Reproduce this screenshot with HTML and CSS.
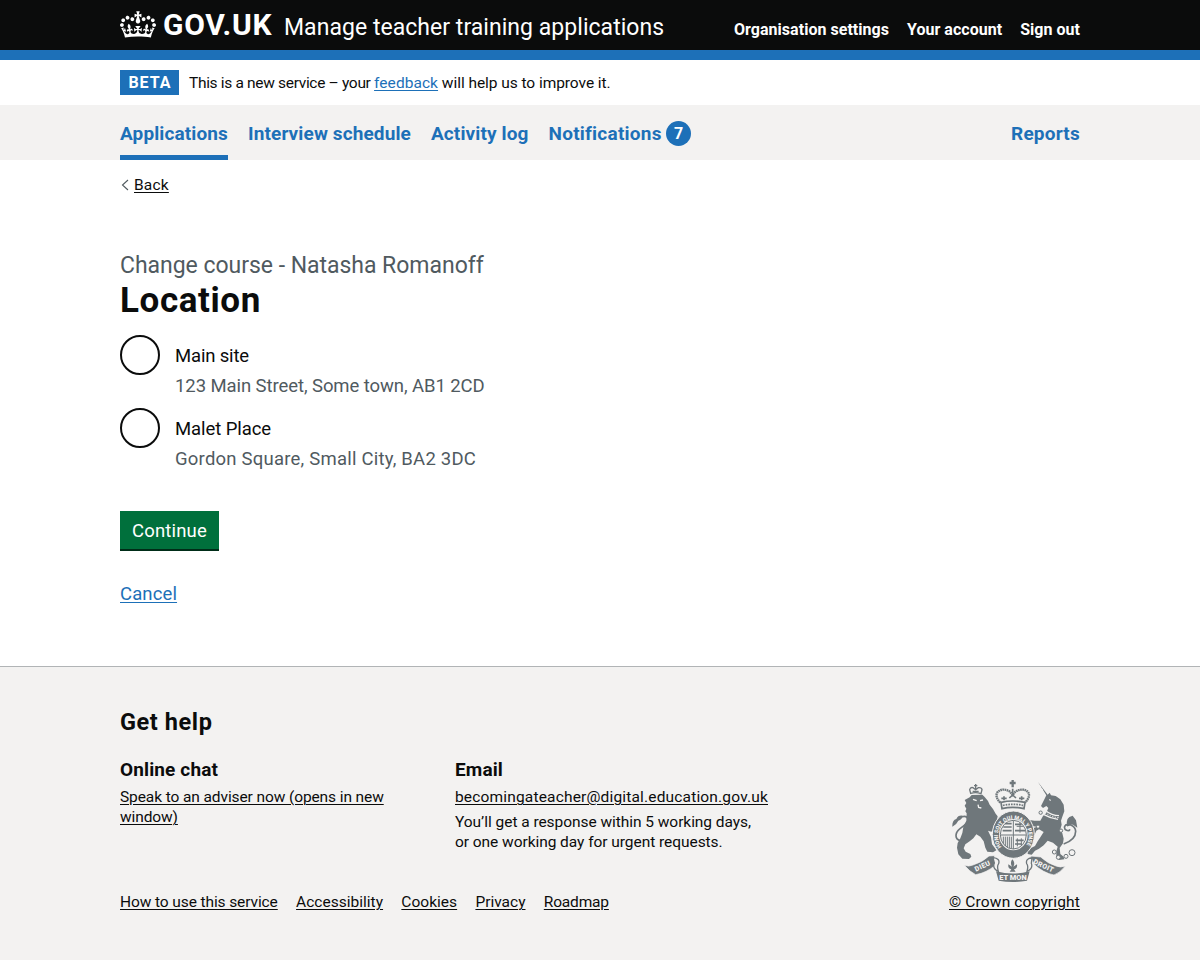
FILE: index.html
```html
<!DOCTYPE html>
<html lang="en">
<head>
<meta charset="utf-8">
<title>Location - Manage teacher training applications - GOV.UK</title>
<link rel="stylesheet" href="styles.css">
</head>
<body>
<header class="header">
  <div class="container header-row">
    <a class="logo" href="#">
      <svg class="crown" viewBox="0 0 132 97" width="36" height="27" aria-hidden="true"><path fill="currentColor" fill-rule="evenodd" d="M25 30.2c3.5 1.5 7.7-.2 9.1-3.7 1.5-3.6-.2-7.8-3.9-9.2-3.6-1.4-7.6.3-9.1 3.9-1.4 3.5.3 7.5 3.9 9zM9 39.5c3.6 1.5 7.8-.2 9.2-3.7 1.5-3.6-.2-7.8-3.9-9.1-3.6-1.5-7.6.2-9.1 3.8-1.4 3.5.3 7.5 3.8 9zM4.4 57.2c3.5 1.5 7.7-.2 9.1-3.8 1.5-3.6-.2-7.7-3.9-9.1-3.5-1.5-7.6.3-9.1 3.8-1.4 3.5.3 7.6 3.9 9.1zm38.3-21.4c3.5 1.5 7.7-.2 9.1-3.8 1.5-3.6-.2-7.7-3.9-9.1-3.6-1.5-7.6.3-9.1 3.8-1.3 3.6.4 7.7 3.9 9.1zm64.4-5.6c-3.6 1.5-7.8-.2-9.1-3.7-1.5-3.6.2-7.8 3.8-9.2 3.6-1.4 7.7.3 9.2 3.9 1.3 3.5-.4 7.5-3.9 9zm15.9 9.3c-3.6 1.5-7.7-.2-9.1-3.7-1.5-3.6.2-7.8 3.7-9.1 3.6-1.5 7.7.2 9.2 3.8 1.5 3.5-.3 7.5-3.8 9zm4.7 17.7c-3.6 1.5-7.8-.2-9.2-3.8-1.5-3.6.2-7.7 3.9-9.1 3.6-1.5 7.7.3 9.2 3.8 1.3 3.5-.4 7.6-3.9 9.1zM89.3 35.8c-3.6 1.5-7.8-.2-9.2-3.8-1.4-3.6.2-7.7 3.9-9.1 3.6-1.5 7.7.3 9.2 3.8 1.4 3.6-.3 7.7-3.9 9.1zM69.7 17.7l8.9 4.7V9.3l-8.9 2.8c-.2-.3-.5-.6-.9-.9L72.4 0H59.6l3.5 11.2c-.3.3-.6.5-.9.9l-8.8-2.8v13.1l8.8-4.7c.3.3.6.7.9.9l-5 15.4v.1c-.2.8-.4 1.6-.4 2.4 0 4.1 3.1 7.5 7 8.1h.2c.3 0 .7.1 1 .1.4 0 .7 0 1-.1h.2c4-.6 7.1-4.1 7.1-8.1 0-.8-.1-1.7-.4-2.4V34l-5.1-15.4c.4-.2.7-.6 1-.9zM66 92.8c16.9 0 32.8 1.1 47.1 3.2 4-16.9 8.9-26.7 14-33.5l-9.6-3.4c1 4.9 1.1 7.2 0 10.2-1.5-1.4-3-4.3-4.2-8.7L108.6 76c2.8-2 5-3.2 7.5-3.3-4.4 9.4-10 11.9-13.6 11.2-4.3-.8-6.3-4.6-5.6-7.9 1-4.7 5.7-5.9 8-.5 4.3-8.7-3-11.4-7.6-8.8 7.1-7.2 7.9-13.5 2.1-21.1-8 6.1-8.1 12.3-4.5 20.8-4.7-5.4-12.1-2.5-9.5 6.2 3.4-5.2 7.9-2 7.2 3.1-.6 4.3-6.4 7.8-13.5 7.2-10.3-.9-10.9-8-11.2-13.8 2.5-.5 7.1 1.8 11 7.3L80.2 60c-4.1 4.4-8 5.3-12.3 5.4 1.4-4.4 8-11.6 8-11.6H55.5s6.4 7.2 7.9 11.6c-4.2-.1-8-1-12.3-5.4l1.4 16.4c3.9-5.5 8.5-7.7 10.9-7.3-.3 5.8-.9 12.8-11.1 13.8-7.2.6-12.9-2.9-13.5-7.2-.7-5 3.8-8.3 7.1-3.1 2.7-8.7-4.6-11.6-9.4-6.2 3.7-8.5 3.6-14.7-4.6-20.8-5.8 7.6-5 13.9 2.2 21.1-4.7-2.6-11.9.1-7.7 8.8 2.3-5.5 7.1-4.2 8.1.5.7 3.3-1.3 7.1-5.7 7.9-3.5.7-9-1.8-13.5-11.2 2.5.1 4.7 1.3 7.5 3.3l-4.7-15.4c-1.2 4.4-2.7 7.2-4.3 8.7-1.1-3-.9-5.3 0-10.2l-9.5 3.4c5 6.9 9.9 16.7 14 33.5 14.8-2.1 30.8-3.2 47.7-3.2z"/></svg>
      <span class="logo-text">GOV.UK</span>
    </a>
    <a class="service-name" href="#">Manage teacher training applications</a>
    <nav class="account-nav">
      <a href="#">Organisation settings</a>
      <a href="#">Your account</a>
      <a href="#">Sign out</a>
    </nav>
  </div>
</header>

<div class="container phase-banner">
  <strong class="tag">BETA</strong>
  <p class="phase-text"><span class="phase-lead">This is a new service – your </span><a class="link phase-link" href="#">feedback</a> will help us to improve it.</p>
</div>

<nav class="primary-nav">
  <div class="container primary-row">
    <a class="nav-item nav-current" href="#">Applications</a>
    <a class="nav-item" href="#">Interview schedule</a>
    <a class="nav-item" href="#">Activity log</a>
    <a class="nav-item nav-notifications" href="#"><span class="nav-label">Notifications</span><span class="count">7</span></a>
    <a class="nav-item nav-reports" href="#">Reports</a>
  </div>
</nav>

<main class="container main">
  <a class="back" href="#">
    <svg class="back-arrow" width="8" height="12" viewBox="0 0 8 12" aria-hidden="true"><path d="M7 1 1.5 6 7 11" fill="none" stroke="#505a5f" stroke-width="1.1"/></svg>
    <span class="back-text">Back</span>
  </a>
  <h1 class="heading"><span class="caption">Change course - Natasha Romanoff</span><span class="title">Location</span></h1>
  <form class="form">
    <label class="radio">
      <span class="radio-circle"></span>
      <span class="radio-body"><span class="radio-label label-main">Main site</span><span class="radio-hint">123 Main Street, Some town, AB1 2CD</span></span>
    </label>
    <label class="radio">
      <span class="radio-circle"></span>
      <span class="radio-body"><span class="radio-label">Malet Place</span><span class="radio-hint hint-wide">Gordon Square, Small City, BA2 3DC</span></span>
    </label>
    <button class="button" type="button">Continue</button>
  </form>
  <a class="link cancel" href="#">Cancel</a>
</main>

<footer class="footer">
  <div class="container">
    <h2 class="footer-title">Get help</h2>
    <div class="footer-row">
      <div class="footer-main">
        <div class="help-columns">
          <section>
            <h3 class="help-heading">Online chat</h3>
            <a class="footer-link" href="#">Speak to an adviser now (opens in new<br>window)</a>
          </section>
          <section>
            <h3 class="help-heading">Email</h3>
            <a class="footer-link email" href="#">becomingateacher@digital.education.gov.uk</a>
            <p class="help-text">You’ll get a response within 5 working days,<br>or one working day for urgent requests.</p>
          </section>
        </div>
        <nav class="meta-links">
          <a class="footer-link" href="#">How to use this service</a>
          <a class="footer-link wide" href="#">Accessibility</a>
          <a class="footer-link wide" href="#">Cookies</a>
          <a class="footer-link even" href="#">Privacy</a>
          <a class="footer-link tight" href="#">Roadmap</a>
        </nav>
      </div>
      <div class="copyright">
        <svg class="crest" viewBox="35 29 378 309" width="126" height="103" aria-hidden="true">
          <defs><path id="garter" d="M186 235A46 50 0 1 1 252 235"/></defs>
          <!-- lion and its crown -->
          <path fill="#6f777b" d="M88 84l6-7 32-1 7 7 10 12 5 11 10 13 8 14 6 8-2 10 10 8-8 9-12 0 3 12-10 7-10-3 9 19 3 22 8 10 5 8-10 6-17-2-6-12-5-19-10-14-12-7-9 12-11 9-13 9-5 12 6 10 14 7 3 8-7 7-20-1-12-13-4-20 2-14 8-14 6-16 3-18 9-19 1-22-4-6 3-8-5-9 5-8-5-9z"/>
          <path fill="none" stroke="#6f777b" stroke-width="4" d="M91 72l-3-11q2-8 10-6l8 6 8-6q10-1 11 6l-3 12q-15-6-31-1zM106 44v18M101 49h10M97 66h18"/>
          <path fill="none" stroke="#f3f2f1" stroke-width="4" d="M98 90l11 4M119 94l9-2M113 106l2 8 8 2"/>
          <!-- unicorn -->
          <path fill="#6f777b" d="M293 38L322 76l6-6 4 8 14 2 14 10 10 16 2 20-6 16-4 12 2 12-4 14 6 12 4 16-2 14-10 14 2 18 10 8 2 8-16 2-8-8 0-18 4-14-14-12-16-6-12 14-14 10-12 6-10 12-12-2 0-8 10-10 12-6 8-14 8-12 10-16-14-8-8 4-6 14-8 2-2-12 8-12 10-4-16-2-8 6-8-6 2-12 8-6 14 2 18 0 8-14 10-10 6-14-6-6-10 6-6-6 6-12 6-12 4-8z"/>
          <path fill="none" stroke="#f3f2f1" stroke-width="4" d="M316 124q18 14 40 15M311 136q20 12 42 14"/>
          <path fill="none" stroke="#f3f2f1" stroke-width="3" stroke-dasharray="4 4" d="M314 130q18 13 41 15"/>
          <path fill="none" stroke="#f3f2f1" stroke-width="3" d="M326 91l6 2M297 50l5 3M303 58l5 3"/>
          <!-- tails -->
          <path fill="none" stroke="#6f777b" stroke-width="5" d="M72 216Q40 214 49 190c4-12 30-22 34-36 2-13-12-17-24-8M370 224q36-12 36-38c-1-19-27-27-33-15-3 12 12 17 16 9M380 169q16-1 10-20"/>
          <path fill="#6f777b" d="M36 172q-1-20 12-23 5-12 19-10-2 12-13 15-6 13-18 18zM380 164q-3-14 7-21l10-4 10 14 4 22-13-9z"/>
          <!-- chain -->
          <g fill="#f3f2f1" stroke="#6f777b" stroke-width="3"><circle cx="301" cy="130" r="5"/><circle cx="293" cy="172" r="5"/><circle cx="362" cy="184" r="5"/><circle cx="342" cy="248" r="6"/><circle cx="354" cy="264" r="6"/><circle cx="377" cy="261" r="6"/><circle cx="395" cy="250" r="9"/></g>
          <!-- royal crown -->
          <g fill="none" stroke="#6f777b">
            <path stroke-width="7" stroke-dasharray="5 1.5" d="M180 100q-18-19-8-32 15-14 37-1l8 10 8-10q24-13 38 1 9 13-9 32"/>
            <path stroke-width="7" d="M217 32v22M208 41h18"/>
            <path stroke-width="5" d="M217 58v22M207 86l10-9 10 9M191 93v-12M183 87h16M244 93v-12M236 87h16"/>
            <path stroke-width="5" d="M182 99q35-8 72 0l-3 19q-34-8-66 0z"/>
            <path stroke-width="5" stroke-dasharray="5 3" d="M188 108q30-6 60 0"/>
          </g>
          <!-- garter and shield -->
          <ellipse cx="219" cy="196" rx="63" ry="71" fill="#6f777b" stroke="#f3f2f1" stroke-width="3"/>
          <ellipse cx="219" cy="196" rx="43" ry="47" fill="#f3f2f1"/>
          <ellipse cx="219" cy="196" rx="39" ry="43" fill="#f3f2f1" stroke="#6f777b" stroke-width="3"/>
          <g fill="none" stroke="#6f777b">
            <path stroke-width="3" d="M219 153v86M180 197h78"/>
            <path stroke-width="5" d="M189 173h25M187 184h27M194 163h20M224 165h20M224 184h30M226 213h24M224 224h20"/>
            <path stroke-width="3" d="M239 160v30M229 171h20M189 202v20M195 202v28M201 202v33M207 202v34M213 202v34M231 207v24M243 207v20"/>
          </g>
          <!-- ribbon -->
          <path fill="#6f777b" stroke="#f3f2f1" stroke-width="2" d="M72 288q13 5 26-1 28-8 48-27l16-1 4 28q-28 24-60 29-18-9-34-28zM271 260l30 3q22 20 46 27 13 6 28 0-16 21-34 27-32-6-60-32z"/>
          <path fill="#f3f2f1" stroke="#6f777b" stroke-width="4" d="M158 265q22 2 17 18-6 7-1 23-19-9-12-25zM275 265q-20 3-16 18 6 7 1 23 19-8 13-24z"/>
          <path fill="#6f777b" d="M167 306q51 13 101 0l-8 28q-43 8-85 0z"/>
          <path fill="#6f777b" d="M216 270q10 11 3 22l11-7q2 13-9 15l5 7h-18l5-7q-11-2-9-15l11 7q-7-11 1-22z"/>
          <g font-family="Roboto, sans-serif" font-weight="900" fill="#f3f2f1">
            <text font-size="17"><textPath href="#garter" startOffset="3" textLength="213" lengthAdjust="spacingAndGlyphs">HONI SOIT QUI MAL Y PENSE</textPath></text>
            <text x="107" y="307" font-size="21" transform="rotate(-25 107 307)" textLength="49">DIEU</text>
            <text x="177" y="331" font-size="21" textLength="82" lengthAdjust="spacingAndGlyphs">ET MON</text>
            <text x="277" y="282" font-size="21" transform="rotate(25 277 282)" textLength="65">DROIT</text>
          </g>
        </svg>
        <a class="footer-link crown-link" href="#">© Crown copyright</a>
      </div>
    </div>
  </div>
</footer>
</body>
</html>
```

FILE: styles.css
```css
* { box-sizing: border-box; }
body { margin: 0; background: #fff; color: #0b0c0c; font: 15.5px/20px Roboto, "Liberation Sans", sans-serif; }
h1, h2, h3, p { margin: 0; }
a { color: inherit; text-decoration: none; }
.container { width: 960px; margin: 0 auto; }
.link { color: #1d70b8; text-decoration: underline; text-decoration-thickness: 1px; text-underline-offset: 2px; }

.header { height: 60px; background: #0b0c0c; border-bottom: 10px solid #1d70b8; color: #fff; }
.header-row { display: flex; height: 50px; align-items: flex-start; }
.logo { display: flex; width: 164px; padding-top: 10.5px; }
.crown { display: block; margin-right: 7px; }
.logo-text { margin-top: -1px; font-size: 30px; font-weight: 700; line-height: 30px; letter-spacing: 0.75px; }
.service-name { font-size: 23px; line-height: 30px; letter-spacing: 0.04px; padding-top: 13px; }
.account-nav { display: flex; gap: 18px; margin-left: auto; padding-top: 20px; font-size: 16px; font-weight: 700; letter-spacing: 0.03px; }

.phase-banner { display: flex; height: 45px; align-items: flex-start; padding-top: 10px; }
.tag { width: 59px; height: 25px; margin-right: 10px; background: #1d70b8; color: #fff; font-size: 16px; line-height: 26px; letter-spacing: 1px; text-align: center; text-indent: 1px; }
.phase-text { line-height: 26px; letter-spacing: -0.05px; white-space: pre; }
.phase-lead { letter-spacing: -0.32px; }
.phase-link { letter-spacing: 0.06px; }

.primary-nav { height: 55px; background: #f3f2f1; }
.primary-row { display: flex; height: 55px; gap: 20px; }
.nav-item { height: 55px; padding-top: 16px; color: #1d70b8; font-size: 19px; font-weight: 700; line-height: 25px; letter-spacing: 0.12px; }
.nav-current { border-bottom: 5px solid #1d70b8; }
.nav-notifications { display: flex; letter-spacing: 0.24px; }
.nav-label { width: 117.5px; }
.count { width: 25px; height: 25px; border-radius: 50%; background: #1d70b8; color: #fff; font-size: 16px; line-height: 25px; text-align: center; letter-spacing: 0; }
.nav-reports { margin-left: auto; letter-spacing: 0.22px; }

.main { height: 506px; padding-top: 15px; }
.back { display: flex; width: max-content; align-items: center; gap: 5px; padding-left: 1px; }
.back-text { text-decoration: underline; text-underline-offset: 2px; text-decoration-thickness: 1px; letter-spacing: 0.2px; }
.heading { margin-top: 56px; font-weight: 400; }
.caption { display: block; color: #505a5f; font-size: 23px; line-height: 30px; letter-spacing: -0.03px; }
.title { display: block; font-size: 35px; font-weight: 700; line-height: 39px; letter-spacing: 0.6px; }
.form { padding-top: 15px; }
.radio { display: flex; height: 63px; margin-bottom: 10px; gap: 15px; }
.radio-circle { width: 40px; height: 40px; border: 2px solid #0b0c0c; border-radius: 50%; background: #fff; }
.radio-body { display: grid; align-content: start; padding-top: 9px; font-size: 18.5px; line-height: 25px; row-gap: 5px; letter-spacing: -0.08px; }
.label-main { letter-spacing: -0.16px; }
.radio-hint { color: #505a5f; }
.hint-wide { letter-spacing: 0.22px; }
.button { display: block; width: 99px; height: 38px; margin-top: 40px; padding: 2px 0 0; border: 0; background: #00703c; box-shadow: 0 2px 0 #002d18; color: #fff; font: 18.5px/36px Roboto, sans-serif; letter-spacing: 0.17px; }
.cancel { display: block; width: max-content; margin-top: 32.5px; font-size: 18.5px; line-height: 25px; letter-spacing: 0.12px; }

.footer { height: 294px; padding-top: 40px; border-top: 1px solid #b1b4b6; background: #f3f2f1; }
.footer-title { font-size: 23.5px; line-height: 30px; letter-spacing: 0.58px; }
.footer-row { display: flex; justify-content: space-between; margin-top: 20px; }
.help-columns { display: grid; grid-template-columns: 305px 320px; column-gap: 30px; height: 115px; margin-bottom: 20px; }
.help-heading { margin-bottom: 5px; font-size: 19px; line-height: 25px; letter-spacing: 0.13px; }
.footer-link { text-decoration: underline; text-decoration-thickness: 1px; text-underline-offset: 2px; letter-spacing: -0.1px; }
.email { letter-spacing: 0.17px; }
.help-text { margin-top: 5px; letter-spacing: -0.05px; }
.meta-links { display: flex; gap: 18.3px; }
.wide { letter-spacing: 0.02px; }
.even { letter-spacing: 0; }
.tight { letter-spacing: -0.18px; }
.copyright { display: flex; flex-direction: column; width: 131px; padding-top: 22px; align-items: center; }
.crest { display: block; margin-bottom: 10px; }
.crown-link { width: 131px; white-space: nowrap; letter-spacing: 0.155px; }
```
